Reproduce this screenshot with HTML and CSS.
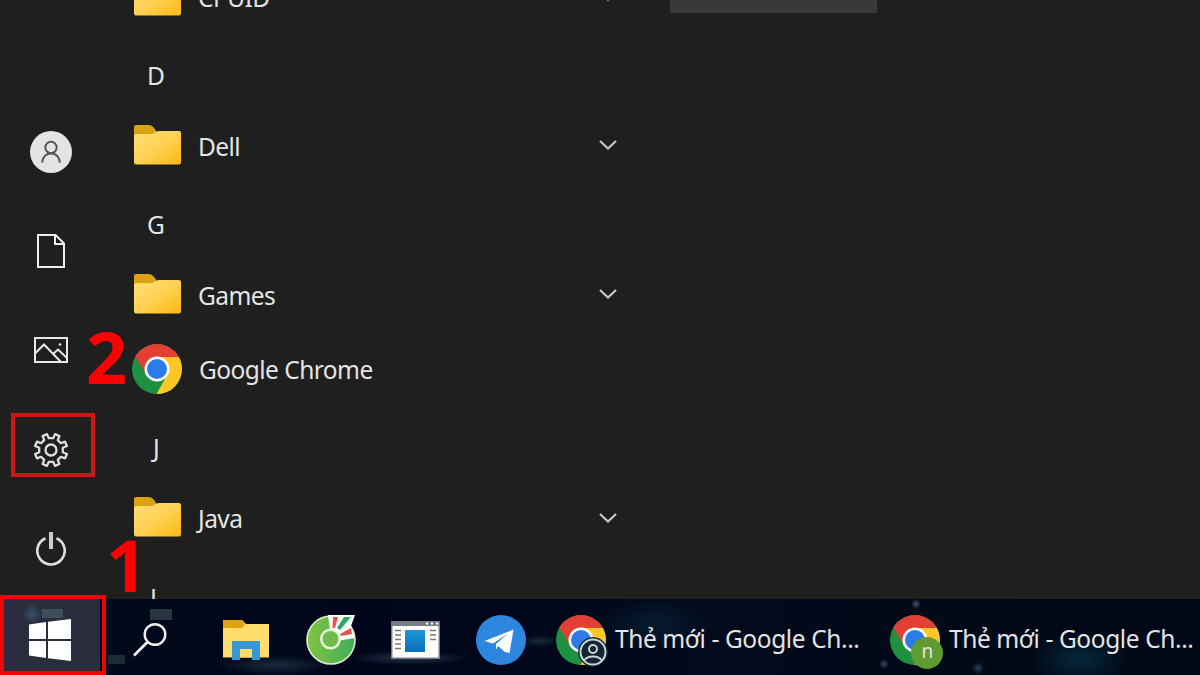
FILE: index.html
```html
<!DOCTYPE html>
<html lang="vi">
<head>
  <meta charset="UTF-8" />
  <title>Start Menu</title>
  <meta name="viewport" content="width=device-width, initial-scale=1.0"/>
  <link rel="stylesheet" href="styles.css">
</head>
<body>

  <!-- shared icons -->
  <svg class="defs" width="0" height="0">
    <defs>
      <linearGradient id="folder-fill" x1="0" y1="0" x2="1" y2="1">
        <stop offset="0" stop-color="#ffe07a"/>
        <stop offset="0.5" stop-color="#ffd153"/>
        <stop offset="1" stop-color="#fdb813"/>
      </linearGradient>
      <linearGradient id="coc-fill" x1="0" y1="0" x2="1" y2="0">
        <stop offset="0" stop-color="#82c341"/>
        <stop offset="1" stop-color="#3fae5a"/>
      </linearGradient>
      <linearGradient id="win-fill" x1="0" y1="0" x2="0" y2="1">
        <stop offset="0" stop-color="#1c97d8"/>
        <stop offset="1" stop-color="#0b6cb8"/>
      </linearGradient>
      <clipPath id="chrome-clip"><circle cx="25" cy="25" r="25"/></clipPath>
    </defs>
    <symbol id="folder" viewBox="0 0 47 40">
      <path d="M0 2Q0 0 2 0H15Q18 0 20 3L23 7V14H0Z" fill="#d9a313"/>
      <path d="M0 11Q0 9 2 9H17Q19 9 21 7.500Q23 6 25 6H45Q47 6 47 8V37Q47 39.500 45 39.500H2Q0 39.500 0 37Z" fill="url(#folder-fill)"/>
    </symbol>
    <symbol id="chrome" viewBox="0 0 50 50">
      <g clip-path="url(#chrome-clip)">
        <rect width="50" height="50" fill="#1e9141"/>
        <path d="M25 13H50V50H25L35.400 31Z" fill="#fdc727"/>
        <path d="M25 25L14.600 31L3.300 12.500V0H50V13H25Z" fill="#e33f34"/>
        <path d="M35.400 31L24.500 50H40L44 25Z" fill="#fdc727"/>
      </g>
      <circle cx="25" cy="25" r="12.500" fill="#fff"/>
      <circle cx="25" cy="25" r="10" fill="#2b7be9"/>
    </symbol>
    <symbol id="chevron" viewBox="0 0 18 10">
      <path d="M1 1L9 8.500L17 1" fill="none" stroke="#c8c8c8" stroke-width="2.200"/>
    </symbol>
  </svg>

  <div class="start-menu">
    <nav class="rail">
      <div class="rail-item">
        <svg width="42" height="42" viewBox="0 0 42 42">
          <circle cx="21" cy="21" r="21" fill="#e4e4e4"/>
          <circle cx="21" cy="16.500" r="5.700" fill="none" stroke="#555" stroke-width="2"/>
          <path d="M12 31.500C13 25.500 16 22.500 21 22.500S29 25.500 30 31.500" fill="none" stroke="#555" stroke-width="2"/>
        </svg>
      </div>
      <div class="rail-item">
        <svg width="28" height="34" viewBox="0 0 28 34">
          <path d="M1 1H18.500L27 9.500V33H1Z M18 1V10H27" fill="none" stroke="#eee" stroke-width="2"/>
        </svg>
      </div>
      <div class="rail-item">
        <svg width="34" height="26" viewBox="0 0 34 26">
          <path d="M1 1H33V25H1Z M1 16.500L10 7.500L27 25 M19 17L24 12.500L33 21" fill="none" stroke="#e8e8e8" stroke-width="2"/>
          <circle cx="26" cy="7.500" r="1.300" fill="#e8e8e8"/>
        </svg>
      </div>
      <div class="rail-item">
        <svg width="36" height="36" viewBox="-18 -18 36 36">
          <path d="M-2.200 -11.800L-4 -15.900L-8.400 -14L-6.800 -9.900L-9.900 -6.800L-14 -8.400L-15.900 -4L-11.800 -2.200V2.200L-15.900 4L-14 8.400L-9.900 6.800L-6.800 9.900L-8.400 14L-4 15.900L-2.200 11.800H2.200L4 15.900L8.400 14L6.800 9.900L9.900 6.800L14 8.400L15.900 4L11.800 2.200V-2.200L15.900 -4L14 -8.400L9.900 -6.800L6.800 -9.900L8.400 -14L4 -15.900L2.200 -11.800Z" fill="none" stroke="#ddd" stroke-width="2.300" stroke-linejoin="round"/>
          <circle r="5.500" fill="none" stroke="#ddd" stroke-width="2.300"/>
        </svg>
      </div>
      <div class="rail-item">
        <svg width="30" height="34" viewBox="0 0 30 34">
          <path d="M9.500 6.200A13.700 13.700 0 1 0 20.500 6.200" fill="none" stroke="#ddd" stroke-width="2.600"/>
          <path d="M15 0V17" stroke="#ccc" stroke-width="4"/>
        </svg>
      </div>
    </nav>

    <div class="app-list">
      <div class="app"><svg class="folder"><use href="#folder"/></svg><span>CPUID</span><svg class="chevron"><use href="#chevron"/></svg></div>
      <div class="letter">D</div>
      <div class="app"><svg class="folder"><use href="#folder"/></svg><span>Dell</span><svg class="chevron"><use href="#chevron"/></svg></div>
      <div class="letter">G</div>
      <div class="app"><svg class="folder"><use href="#folder"/></svg><span>Games</span><svg class="chevron"><use href="#chevron"/></svg></div>
      <div class="app"><svg class="chrome"><use href="#chrome"/></svg><span>Google Chrome</span></div>
      <div class="letter narrow">J</div>
      <div class="app"><svg class="folder"><use href="#folder"/></svg><span>Java</span><svg class="chevron"><use href="#chevron"/></svg></div>
      <div class="letter last">L</div>
    </div>

    <div class="tiles">
      <div class="tile"></div>
    </div>
  </div>

  <div class="taskbar">
    <div class="start-button">
      <svg width="42" height="42" viewBox="0 0 42 42" fill="#fff">
        <path d="M0 5.500L17 3V20H0Z M19 2.700L42 0V20H19Z M0 22H17V39L0 36.500Z M19 22H42V42L19 39.300Z"/>
      </svg>
    </div>
    <div class="search-button">
      <svg width="34" height="34" viewBox="0 0 34 34" fill="none" stroke="#eee">
        <circle cx="22" cy="11.500" r="10.300" stroke-width="2.400"/>
        <path d="M14.500 19L1 32.500" stroke-width="2.800"/>
      </svg>
    </div>
    <div class="task">
      <svg width="46" height="40" viewBox="0 0 46 40">
        <path d="M0 0H19L23 4H46V37.500H0Z" fill="#ffdc6b"/>
        <path d="M0 1Q0 0 1 0H18Q20 0 22 4L19 8H0Z" fill="#dfa410"/>
        <path d="M9 40V21H37V40H29V29H17V40Z" fill="#3898d3"/>
        <path d="M17 29H29V37.500H17Z" fill="#ffdc6b"/>
      </svg>
    </div>
    <div class="task">
      <svg width="50" height="51" viewBox="0 0 50 51">
        <circle cx="25" cy="26" r="24.800" fill="#dcefd2"/>
        <circle cx="25" cy="26" r="23.200" fill="url(#coc-fill)"/>
        <path d="M25 25L22 1H49L45 12L49 24L30 27Z" fill="#fff"/>
        <path d="M27 3H32L29 14H26.500Z M45 14L46 20L35 22L34 20Z" fill="#e2544d"/>
        <path d="M38 3H45L34 16L31 14Z" fill="#2fa765"/>
        <circle cx="24.500" cy="25" r="10.500" fill="#e6f4dc"/>
        <circle cx="24.500" cy="25" r="8" fill="#70bd4d"/>
      </svg>
    </div>
    <div class="task">
      <svg width="49" height="38" viewBox="0 0 49 38">
        <path d="M0 0H49V38H0Z" fill="#777d86"/>
        <path d="M1.500 5H47.500V36.500H1.500Z" fill="#fff"/>
        <path d="M35 2.500H37M40 2.500H42M45 2.500H47" stroke="#fff" stroke-width="2"/>
        <path d="M14 9H34V31H14Z" fill="url(#win-fill)"/>
        <path d="M4 9.500H10M4 14H10M4 18.500H10M4 23H10M4 27.500H10M39 9.500H45M39 14H45M39 18.500H45" stroke="#777" stroke-width="1.700"/>
      </svg>
    </div>
    <div class="task">
      <svg width="50" height="50" viewBox="0 0 50 50">
        <circle cx="25" cy="25" r="25" fill="#2e87df"/>
        <path d="M8.500 26L37.500 14.500L33.500 38L29 37L22 31L20 34.500V29L32 18.500L17 28.500Z" fill="#fff"/>
      </svg>
    </div>
    <div class="task window">
      <div class="profile-icon">
        <svg class="chrome"><use href="#chrome"/></svg>
        <svg class="badge guest" width="30" height="30" viewBox="0 0 30 30">
          <circle cx="15" cy="15" r="15" fill="#13252f"/>
          <g fill="none" stroke="#c9d3d8" stroke-width="2">
            <circle cx="15" cy="15" r="12.500"/>
            <circle cx="15" cy="12" r="4"/>
            <path d="M6.500 23Q9 19.500 15 19.500T23.500 23"/>
          </g>
        </svg>
      </div>
      <span>Thẻ mới - Google Ch...</span>
    </div>
    <div class="task window">
      <div class="profile-icon">
        <svg class="chrome"><use href="#chrome"/></svg>
        <div class="badge user">n</div>
      </div>
      <span>Thẻ mới - Google Ch...</span>
    </div>
  </div>

  <!-- step markers -->
  <div class="mark mark-settings"></div>
  <div class="mark mark-start"></div>
  <div class="step step-1">1</div>
  <div class="step step-2">2</div>

</body>
</html>
```
FILE: styles.css
```css
* {
  box-sizing: border-box;
}

body {
  position: relative;
  margin: 0;
  width: 1200px;
  height: 675px;
  overflow: hidden;
  background-color: #1f1f1f;
  color: #e4e4e4;
  font-family: "Noto Sans", "Open Sans", sans-serif;
  font-size: 24.5px;
  letter-spacing: -0.55px;
}

svg {
  display: block;
  flex-shrink: 0;
}

.defs {
  position: absolute;
}

.start-menu {
  display: flex;
  height: 599px;
  overflow: hidden;
}

.rail {
  width: 103px;
  padding-top: 102px;
}

.rail-item {
  display: flex;
  align-items: center;
  justify-content: center;
  height: 99.4px;
  padding-right: 1px;
}

.app-list {
  width: 567px;
  margin-top: -40px;
  padding-left: 30px;
}

.app,
.letter {
  display: flex;
  align-items: center;
  height: 74.5px;
}

.app {
  width: 484px;
}

.app span {
  margin-left: 16px;
}

.folder {
  width: 47px;
  height: 40px;
  margin: 0 1px 3px;
}

.chrome {
  width: 50px;
  height: 50px;
}

.app .chrome {
  margin: 0 0 2px -1px;
}

.app .chrome + span {
  margin-left: 17px;
}

.chevron {
  width: 18px;
  height: 10px;
  margin-left: auto;
  margin-bottom: 2px;
}

.letter {
  padding: 8px 0 0 14px;
}

.narrow {
  padding-left: 20px;
  padding-top: 6px;
}

.last {
  padding-left: 17px;
}

.tile {
  width: 207px;
  height: 13px;
  background-color: #383838;
}

.taskbar {
  display: flex;
  height: 76px;
  background:
    radial-gradient(ellipse 60px 26px at 655px 25px, #061c30, transparent),
    radial-gradient(ellipse 50px 26px at 1080px 60px, #05283c, transparent),
    radial-gradient(ellipse 60px 10px at 275px 66px, #172b3c, transparent),
    radial-gradient(ellipse 60px 7px at 410px 59px, #24384a, transparent),
    radial-gradient(ellipse 20px 6px at 540px 42px, #172a38, transparent),
    radial-gradient(circle 5px at 884px 65px, #304c6a, transparent),
    radial-gradient(circle 5px at 916px 5px, #43576a, transparent),
    radial-gradient(circle 6px at 978px 69px, #28415e, transparent),
    linear-gradient(90deg, #020b1b, #01051a 30%, #020a1b 60%, #010817);
}

.start-button,
.search-button,
.task {
  display: flex;
  align-items: center;
  justify-content: center;
  flex-shrink: 0;
  padding-top: 5px;
}

.start-button {
  width: 100px;
  background:
    radial-gradient(circle 10px at 32px 15px, #35516a, transparent),
    linear-gradient(#404e5b, #404e5b) 42px 10px / 21px 9px no-repeat,
    #2a2d3d;
}

.search-button {
  width: 103px;
  padding-right: 4px;
  background:
    linear-gradient(#263541, #263541) 50px 10px / 22px 11px no-repeat,
    linear-gradient(#1b2b38, #1b2b38) 8px 56px / 17px 9px no-repeat;
}

.task {
  width: 85px;
}

.window {
  width: 334px;
  justify-content: flex-start;
  padding-left: 13px;
  white-space: nowrap;
}

.window span {
  margin-left: 9px;
  margin-top: -2px;
  letter-spacing: -0.4px;
}

.profile-icon {
  position: relative;
}

.badge {
  position: absolute;
  width: 30px;
  height: 30px;
  border-radius: 50%;
}

.guest {
  left: 22px;
  top: 22px;
}

.user {
  left: 21px;
  top: 22px;
  width: 32px;
  height: 32px;
  background-color: #5f9b32;
  font-size: 19px;
  line-height: 29px;
  text-align: center;
}

.mark {
  position: absolute;
}

.mark-settings {
  left: 11px;
  top: 413px;
  width: 84px;
  height: 64px;
  border: 4px solid #d01717;
}

.mark-start {
  left: 0;
  top: 595px;
  width: 106px;
  height: 80px;
  border: 4px solid #f00505;
}

.step {
  position: absolute;
  color: #ff0000;
  font-family: "Open Sans", sans-serif;
  font-size: 72px;
  font-weight: 700;
  line-height: 72px;
  letter-spacing: 0;
}

.step-1 {
  left: 106px;
  top: 528px;
}

.step-2 {
  left: 86px;
  top: 320px;
}
```
